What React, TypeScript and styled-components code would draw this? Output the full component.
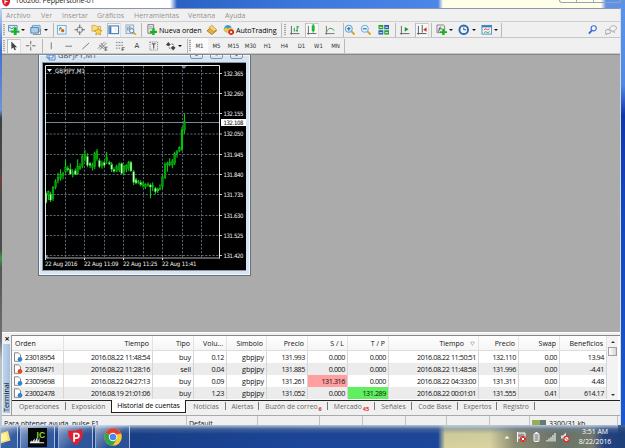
import React from "react";
import styled, { createGlobalStyle, css } from "styled-components";

type Candle = [number, number, number, number, number, number];

// x, high, low, body top, body bottom, kind (0 up, 1 down, 2 strong up)
const candles: Candle[] = [
  [46, 191.5, 203.5, 193.3, 202.7, 1], [48.4, 190.5, 200, 191.7, 195, 0], [50.6, 191.7, 202, 194.3, 200, 1],
  [53, 186, 201, 187.3, 198.7, 0], [55.6, 179.3, 189.3, 181.7, 187.3, 0], [58, 172.7, 183.3, 177.3, 180.7, 0],
  [60.6, 169.3, 180.7, 174.3, 178.3, 0], [63, 172, 179.3, 173.3, 175.3, 0], [65.6, 160, 173.3, 167.3, 171.7, 0],
  [67.8, 166, 171.7, 168, 169.7, 1], [70.3, 163.3, 175, 169.3, 174, 1], [72.7, 169.3, 177.3, 172.3, 174.7, 0],
  [75.3, 168.3, 175, 170.7, 174.3, 1], [77.7, 159.3, 174.7, 166, 174, 0], [80, 163.3, 170, 166.7, 168.7, 0],
  [82.3, 154, 168.3, 156, 166, 0], [85, 150, 161.7, 155, 158.3, 0], [87.4, 153.3, 167.3, 156.7, 165.3, 1],
  [90, 162, 168, 163.3, 165.3, 1], [92.4, 162.7, 170.7, 165, 167.3, 0], [94.7, 151.7, 169.3, 153.3, 166.7, 0],
  [97, 149, 160.7, 151.7, 158.3, 0], [99.4, 158.3, 168.3, 160.7, 166.7, 1], [102, 160.7, 168.7, 163.3, 165.3, 0],
  [104.3, 160.7, 167.3, 162.7, 165.3, 1], [106.7, 152, 164, 157.3, 160.7, 0], [109.3, 160.7, 165, 162.7, 164, 1],
  [111.7, 162, 172, 164, 169.3, 1], [114, 167.3, 172.7, 169.3, 171.3, 1], [116.7, 164.7, 172, 166.7, 171.3, 0],
  [119.3, 162.7, 172, 164, 170, 0], [121.7, 162.3, 174, 163.7, 173.3, 1], [124, 165, 175, 166, 171.7, 0],
  [126.4, 164.3, 172.3, 165.7, 169, 0], [128.7, 161, 171, 162.3, 168.3, 0], [131, 161, 171.7, 162.3, 171, 1],
  [133.7, 170, 185, 171.7, 182.3, 1], [136, 177.7, 184.3, 179.7, 183, 1], [138.4, 180, 183.7, 181.7, 183, 0],
  [140.7, 180.3, 186.3, 182.3, 185, 1], [143, 181.7, 187.7, 183, 185.7, 0], [145.4, 183.3, 189, 184.3, 187, 0],
  [148, 182.3, 186.7, 184.3, 185.7, 0], [150.4, 183.3, 198.3, 185, 187, 1], [152.7, 182.3, 191, 185, 187, 0],
  [155.3, 186.7, 194.3, 188.3, 191.7, 1], [157.7, 187.7, 193, 189, 191, 1], [160, 184.3, 190.3, 188.3, 189.3, 0],
  [162.4, 175, 189, 177, 186.3, 0], [165, 162.3, 179, 164.3, 177.7, 0], [167.4, 161.7, 171.7, 163.3, 165, 0],
  [169.7, 158.3, 166.3, 162.3, 165, 0], [172.3, 159, 168.3, 161, 165, 0], [174.7, 151.7, 165, 153.3, 163.3, 0],
  [177, 150, 157.7, 151.7, 153.7, 0], [179.4, 146.3, 152.3, 147.7, 151, 0], [182, 127, 151, 130, 149.7, 2],
  [184.4, 113.7, 133.7, 121.7, 130.3, 0],
];

const gridX = [65.5, 84.5, 104.5, 123.5, 143.5, 162.5, 182.5, 201.5];
const prices: [string, number][] = [
  ["132.365", 73.5], ["132.260", 93.5], ["132.155", 113.5], ["132.050", 134], ["131.945", 154.5],
  ["131.840", 174.5], ["131.735", 194.5], ["131.630", 215.5], ["131.525", 235.5], ["131.420", 255.5],
];
const dates: [string, number][] = [["22 Aug 2016", 45], ["22 Aug 11:09", 84], ["22 Aug 11:25", 123], ["22 Aug 11:41", 162]];

const columns = ["Orden", "Tiempo", "Tipo", "Volu...", "Símbolo", "Precio", "S / L", "T / P", "Tiempo", "Precio", "Swap", "Beneficios"];
const orders = [
  ["23018954", "2016.08.22 11:48:54", "buy", "0.12", "gbpjpy", "131.993", "0.000", "0.000", "2016.08.22 11:50:51", "132.110", "0.00", "13.94"],
  ["23018471", "2016.08.22 11:28:16", "sell", "0.04", "gbpjpy", "131.885", "0.000", "0.000", "2016.08.22 11:48:58", "131.996", "0.00", "-4.41"],
  ["23009698", "2016.08.22 04:27:13", "buy", "0.09", "gbpjpy", "131.261", "131.316", "0.000", "2016.08.22 04:33:00", "131.311", "0.00", "4.48"],
  ["23002478", "2016.08.19 21:01:06", "buy", "1.23", "gbpjpy", "131.052", "0.000", "131.289", "2016.08.22 00:01:01", "131.555", "0.41", "614.17"],
];

const tabs: { label: string; width: number; badge?: string; active?: boolean }[] = [
  { label: "Operaciones", width: 54 },
  { label: "Exposición", width: 45 },
  { label: "Historial de cuentas", width: 75, active: true },
  { label: "Noticias", width: 40 },
  { label: "Alertas", width: 33 },
  { label: "Buzón de correo", width: 69, badge: "6" },
  { label: "Mercado", width: 47, badge: "45" },
  { label: "Señales", width: 37 },
  { label: "Code Base", width: 46 },
  { label: "Expertos", width: 39 },
  { label: "Registro", width: 38 },
];

const icons: Record<string, React.ReactNode> = {
  newChart: <><path d="M.5 1.5h9v6h-9z" fill="#dcecf8" stroke="#5b93bf" /><path d="M1 3l3 2 3-2 2 2" stroke="#4c9a5a" fill="none" /><path d="M6 4h3v3h3v2H9v3H6V9H3V7h3z" fill="#18b325" /></>,
  profiles: <><path d="M2.5 1.5h8v6h-8z" fill="#cfe4f5" stroke="#6a9fc9" /><path d="M.8 3.5h8v6h-8z" fill="#a9cfec" stroke="#4d86b6" /><path d="M3 11h8V5" fill="none" stroke="#8a8f95" /></>,
  market: <><rect x="1.5" y="1.5" width="9" height="9" fill="#eef6fd" stroke="#6fb0de" /><path d="M3 5l2-2 1.5 2z" fill="#22a040" /><path d="M4 4v3" stroke="#22a040" /><circle cx="7" cy="7" r="1.7" fill="#e05a28" /></>,
  target: <><circle cx="6" cy="6" r="3" fill="none" stroke="#888" /><path d="M6 .5v4M6 7.5v4M.5 6h4M7.5 6h4" stroke="#666" /></>,
  star: <><path d="M1 1.5h4l1 1h4v5H1z" fill="#f7df84" stroke="#c9a13c" strokeWidth=".8" /><path d="M7.5 4l1.2 2.5 2.8.3-2 1.9.5 2.8-2.5-1.3L5 11.5l.5-2.8-2-1.9 2.8-.3z" fill="#ffd84a" stroke="#b98a1c" strokeWidth=".7" /></>,
  panel: <><rect x="1" y="2" width="10" height="8" fill="#fff" stroke="#4788c0" strokeWidth="1.2" /><path d="M1.5 2.5h2v7h-2z" fill="#3f7fbd" /><path d="M6 5h4M6 7h4" stroke="#dfe9f3" /></>,
  tester: <><rect x="1" y="1" width="8" height="9" fill="#dbe9f5" stroke="#8eb1cf" /><path d="M3 3v4M5 2v4M7 4v3" stroke="#777" /><circle cx="7" cy="7" r="2.2" fill="#e9f5fd" stroke="#4d86b6" /><path d="M8.5 8.500l3 3" stroke="#d7a02c" strokeWidth="1.6" /></>,
  order: <><path d="M2 .7h6v9H2z" fill="#f5f5f5" stroke="#777" /><path d="M3 3h4M3 5h4" stroke="#777" strokeWidth=".7" /><path d="M6.5 4.5h2.5v2.500h2.500v2.300H9V12H6.500V9.300H4V7h2.500z" fill="#18b325" /></>,
  book: <><path d="M1 7l5-4 5 4-5 4z" fill="#e9ad3c" stroke="#9b681a" strokeWidth=".8" /><path d="M3 4l3-3 5 5-3 2z" fill="#f6d278" stroke="#a87a25" strokeWidth=".6" /></>,
  auto: <><circle cx="5" cy="5" r="4" fill="#67b3dd" /><path d="M0 6l5-3 6 2-5 5z" fill="#f2c441" /><path d="M2 3l3-2 4 2-4 2z" fill="#4599c8" /><circle cx="8.5" cy="8.5" r="3" fill="#dd2818" /><rect x="7.5" y="7.5" width="2" height="2" fill="#fff" /></>,
  bars: <><path d="M2.5 2v9M1 10h10" stroke="#666" /><path d="M5.5 4v4M8.5 2v6M8.500 3h2M7 7h2" stroke="#169b32" /></>,
  candle: <><path d="M2.5 2v9M1 10h10" stroke="#666" /><path d="M7.5 0v9" stroke="#149a2d" /><rect x="6" y="1.5" width="3" height="6" fill="#15bb31" /></>,
  line: <><path d="M2.5 2v9M1 10h10" stroke="#777" /><path d="M3 8c2-4 4-5 8-1" fill="none" stroke="#3c9d4b" /></>,
  zoomIn: <><path d="M7.5 7.5L11 11" stroke="#d5a12d" strokeWidth="2" /><circle cx="5" cy="5" r="3.7" fill="#e2f2fb" stroke="#4d9ccf" /><path d="M3 5h4M5 3v4" stroke="#2d6fb0" strokeWidth="1.2" /></>,
  zoomOut: <><path d="M7.5 7.5L11 11" stroke="#d5a12d" strokeWidth="2" /><circle cx="5" cy="5" r="3.7" fill="#e2f2fb" stroke="#6bacd6" /><path d="M3 5h4" stroke="#2d6fb0" strokeWidth="1.2" /></>,
  tile: <><path d="M.5 1h5v4.500h-5z" fill="#2ca42f" /><path d="M6.500 1h5v4.500h-5z" fill="#2762ae" /><path d="M.5 6.500h5V11h-5z" fill="#2762ae" /><path d="M6.500 6.500h5V11h-5z" fill="#2ca42f" /><path d="M1.500 3.500h3M7.500 3.500h3M1.500 9h3M7.500 9h3" stroke="#d5f1dd" /></>,
  scroll: <><path d="M2.5 2v9M1 10h10" stroke="#666" /><path d="M6 3l4 2.5L6 8z" fill="#169b32" /></>,
  shift: <><path d="M2.5 2v9M1 10h10M6.5 1v8" stroke="#556" /><path d="M11 3.5L7.5 6 11 8z" fill="#c83324" /></>,
  indicator: <><path d="M1 1h7l1 1v7H1z" fill="#e7e7e7" stroke="#888" /><path d="M5 3c-2 0-1 5-3 5M3 5h3" stroke="#555" fill="none" /><path d="M6.5 5H9v2.500h2.500v2H9V12H6.500V9.500H4v-2h2.500z" fill="#18b325" /></>,
  clock: <><circle cx="6" cy="6" r="4.5" fill="#eaf5fd" stroke="#2d6cb3" strokeWidth="2" /><path d="M6 3.5V6h2.500" stroke="#456" fill="none" /></>,
  template: <><rect x="1" y="1.5" width="10" height="9" fill="#f2f7fb" stroke="#4f8fc6" /><path d="M1 2.5h10" stroke="#3d7fbd" strokeWidth="2" /><path d="M3 6l2-1 2 1 2-1" stroke="#d44" fill="none" /><path d="M3 9l2-1 2 1 2-1" stroke="#3a3" fill="none" /></>,
  search: <><circle cx="7" cy="4.5" r="2.7" fill="#f4f9ff" stroke="#3d6fd6" strokeWidth="1.2" /><path d="M5 6.700L2 10" stroke="#3566cc" strokeWidth="1.8" /></>,
  chat: <><path d="M5 5c0-4 7-4 7-1 0 2-2 3-3 3l1 2-3-2C5 7 5 6 5 5z" fill="#f3f3f6" stroke="#9999a3" strokeWidth=".8" /><path d="M0 8c0-3 6-3 6 0 0 2-2 2-3 2l-2 1V9.500C.3 9 0 9 0 8z" fill="#ebebf0" stroke="#85858e" strokeWidth=".8" /></>,
  cursor: <path d="M3.5 1.500v8l2-1.700 1.300 3 1.500-.7L7 7.500h2.500z" fill="#444" />,
  cross: <path d="M6 1v3.500M6 7.500V11M1 6h3.500M7.500 6H11M5.700 6h.600" stroke="#666" />,
  vline: <path d="M5.500 2.500v7" stroke="#777" />,
  hline: <path d="M2.500 6.500h7" stroke="#777" />,
  trend: <path d="M2.500 9.500l7-6.500" stroke="#777" />,
  channel: <><path d="M1 9l7-7M3 10l7-7M2 5l5 4M4 3l4 5" stroke="#666" strokeWidth=".8" /><path d="M11 7.500H8.500v4H11M8.500 9.500h2" stroke="#444" fill="none" strokeWidth=".8" /></>,
  fibo: <><path d="M2 2.500h8M2 5.500h8M2 8.500h5" stroke="#777" strokeDasharray="1 .6" /><path d="M11 8H8.500v4M8.500 10h2" stroke="#444" fill="none" strokeWidth=".8" /></>,
  label: <><rect x="2" y="2" width="8" height="8.500" fill="none" stroke="#777" strokeDasharray="1 1" /><path d="M4 4h4M6 4v5" stroke="#444" /></>,
  arrows: <><path d="M1 5l2.500-3L6 5 3.500 6.500zM6 8l2.500-2L11 8l-2.500 3z" fill="#444" /><path d="M4 8l1.500 1M7 4l2 1" stroke="#555" /></>,
};

const Icon = ({ name, gap = 5, pressed }: { name: string; gap?: number; pressed?: boolean }) => (
  <Tool $gap={gap} $pressed={pressed}>
    <svg width="11.5" height="11.5" viewBox="0 0 12 12">{icons[name]}</svg>
  </Tool>
);

const Chart = () => (
  <svg width="203" height="207" viewBox="43 63 203 207">
    <rect x="43" y="63" width="203" height="207" fill="#000" />
    <g stroke="#6f8090" strokeWidth=".8" strokeDasharray="2.2 1.5">
      {gridX.map((x) => <line key={x} x1={x} x2={x} y1="66" y2="258" />)}
      {prices.map(([p, y]) => <line key={p} x1="46" x2="220" y1={y} y2={y} />)}
    </g>
    <line x1="46" x2="220" y1="122.5" y2="122.5" stroke="#778899" />
    {candles.map(([x, high, low, top, bottom, kind]) => (
      <g key={x}>
        <line x1={x} x2={x} y1={high} y2={low} stroke="#06e00d" strokeWidth="1" />
        <rect x={x - 0.9} y={top} width="1.8" height={bottom - top} fill={["#069a0a", "#c9ffc4", "#06c90b"][kind]} stroke="#05c409" strokeWidth=".4" />
      </g>
    ))}
    <path d="M45.5 258V65.500H219.500V258.500" fill="none" stroke="#e6e6e6" />
    <path d="M45.5 258H220" fill="none" stroke="#b4b4b4" />
    <path d="M181.5 66.200h5l-2.500 2.500z" fill="#7f93aa" />
    <path d="M46 255l3 3h-3z" fill="#8d9eb2" />
    <path d="M47 69h5l-2.500 3z" fill="#fff" />
    {dates.map(([d, x]) => <path key={d} d={`M${x + 0.5} 258v2`} stroke="#ddd" />)}
    <ChartText x="55" y="72.5" textLength="30">GBPJPY,M1</ChartText>
    {prices.map(([p, y]) => (
      <g key={p}>
        <path d={`M220 ${y}h2`} stroke="#ccc" />
        <ChartText x="223.5" y={y + 2.2} textLength="20">{p}</ChartText>
      </g>
    ))}
    {dates.map(([d, x], i) => <ChartText key={d} x={x} y="266" textLength={i ? 34.5 : 32.5}>{d}</ChartText>)}
    <rect x="221" y="119" width="25" height="7" fill="#fff" />
    <ChartText x="223.5" y="124.7" textLength="20" $dark>132.108</ChartText>
  </svg>
);

const App = () => (
  <Desktop>
    <GlobalStyle />
    <TitleBar>
      <svg width="9" height="7" viewBox="0 0 9 7"><path d="M0 0h8v2Q7 6 4 6.500Q0 5 0 0z" fill="#d91f2c" /><path d="M3 0v4M3 1.500h2.500" stroke="#fff" /></svg>
      <TitleText>100266: Pepperstone-01</TitleText>
      <Caption><i /><i /><i /></Caption>
    </TitleBar>
    <AppFrame>
      <MenuBar>
        <MenuItem $width={35}>Archivo</MenuItem>
        <MenuItem $width={21}>Ver</MenuItem>
        <MenuItem $width={35}>Insertar</MenuItem>
        <MenuItem $width={37}>Gráficos</MenuItem>
        <MenuItem $width={54}>Herramientas</MenuItem>
        <MenuItem $width={37}>Ventana</MenuItem>
        <MenuItem $width={30}>Ayuda</MenuItem>
      </MenuBar>
      <Toolbar>
        <Grip $gap={1} /><Icon name="newChart" gap={3} /><Caret $gap={1} />
        <Icon name="profiles" /><Caret $gap={2} /><Separator $gap={5} />
        <Icon name="market" gap={2} /><Icon name="target" gap={6} /><Icon name="star" /><Icon name="panel" pressed /><Icon name="tester" />
        <Separator $gap={4} /><Icon name="order" gap={4} /><ToolText>Nueva orden</ToolText>
        <Icon name="book" /><Icon name="auto" /><ToolText>AutoTrading</ToolText>
        <Separator $gap={3} /><Grip $gap={2} />
        <Icon name="bars" gap={3} /><Icon name="candle" pressed /><Icon name="line" gap={6} /><Separator $gap={7} />
        <Icon name="zoomIn" gap={0} /><Icon name="zoomOut" gap={4} /><Icon name="tile" gap={6} /><Separator $gap={5} />
        <Icon name="scroll" gap={3} /><Icon name="shift" pressed /><Separator $gap={3} />
        <Icon name="indicator" gap={4} /><Caret $gap={1} /><Icon name="clock" /><Caret $gap={2} />
        <Icon name="template" /><Caret $gap={1} /><Separator $gap={3} />
        <Spacer />
        <Icon name="search" /><Icon name="chat" gap={6} />
      </Toolbar>
      <Toolbar>
        <Grip $gap={1} /><Icon name="cursor" gap={3} pressed /><Icon name="cross" /><Separator $gap={5} />
        <Icon name="vline" gap={3} /><Icon name="hline" /><Icon name="trend" /><Icon name="channel" /><Icon name="fibo" />
        <Letter>A</Letter><Icon name="label" /><Icon name="arrows" /><Caret $gap={1} /><Separator $gap={5} /><Grip $gap={1} />
        {["M1", "M5", "M15", "M30", "H1", "H4", "D1", "W1", "MN"].map((t, i) => <Period key={t} $active={i === 0}>{t}</Period>)}
        <Separator $gap={0} />
      </Toolbar>
      <Workspace>
        <ChartWindow>
          <ChartTitle>
            <svg width="10" height="9" viewBox="0 0 10 9"><path d="M1 1h6v5H1zM3 3h6v5H3z" fill="#eaf4ff" stroke="#4a86d0" /></svg>
            <span>GBPJPY,M1</span>
            <WindowButtons><b>–</b><b>▫</b><b>×</b></WindowButtons>
          </ChartTitle>
          <ChartFrame><Chart /></ChartFrame>
        </ChartWindow>
      </Workspace>
      <Terminal>
        <Side>
          <Close>×</Close>
          <SideLabel>Terminal</SideLabel>
        </Side>
        <TerminalBody>
          <TableArea>
            <div>
              <HeaderRow>
                {columns.map((c, i) => (
                  <HeadCell key={i} $left={i === 0}>
                    {c}
                    {i === 8 && <svg width="5" height="5" viewBox="0 0 5 5"><path d="M.5 1h4L2.500 4.500z" fill="#fff" stroke="#999" strokeWidth=".6" /></svg>}
                  </HeadCell>
                ))}
              </HeaderRow>
              {orders.map((o, r) => (
                <Row key={o[0]} $alt={r % 2 === 1}>
                  {o.map((v, i) => (
                    <Cell key={i} $left={i === 0} $word={i === 2 || i === 4} $mark={v === "131.316" ? "#ff9f9f" : v === "131.289" ? "#5fef5f" : undefined}>
                      {i === 0 && (
                        <svg width="10" height="10" viewBox="0 0 10 10">
                          <path d="M1.500.800h4l2 2v6.500h-6z" fill="#fff" stroke="#777" strokeWidth=".9" />
                          <circle cx="7" cy="7.300" r="2.300" fill={o[2] === "sell" ? "#dc4a22" : "#2585d6"} />
                        </svg>
                      )}
                      <span>{v}</span>
                    </Cell>
                  ))}
                </Row>
              ))}
            </div>
            <ScrollBar><Up /><Thumb /><Spacer /><Down /></ScrollBar>
          </TableArea>
          <Tabs>
            {tabs.map((t, i) => (
              <Tab key={t.label} $width={t.width} $active={t.active} $line={i !== 1 && !t.active}>
                {t.label}{t.badge && <sub>{t.badge}</sub>}
              </Tab>
            ))}
          </Tabs>
        </TerminalBody>
      </Terminal>
      <StatusBar>
        <Status $width={185}>Para obtener ayuda, pulse F1</Status>
        <Status $width={71}>Default</Status>
        <Status $width={62} /><Status $width={43} /><Status $width={43} /><Status $width={41} /><Status $width={43} /><Status $width={40} />
        <Status $width={88}>
          <svg width="15" height="8" viewBox="0 0 15 8"><path d="M1 0v8M3 0v8M5 0v8M7 0v8" stroke="#6f8f1c" strokeWidth="1.4" /><path d="M9 0v8M11 0v8M13 0v8" stroke="#254a4a" strokeWidth="1.4" /></svg>
          3300/31 kb
        </Status>
      </StatusBar>
    </AppFrame>
    <Taskbar>
      <TaskButton $width={17.5}><svg width="18" height="20" viewBox="0 0 18 20"><path d="M-2 6l10-3 3 11-13 4z" fill="#f8df66" /><path d="M-2 8l8-3 2 8-10 3z" fill="#fff3a8" /></svg></TaskButton>
      <TaskButton $width={35}>
        <svg width="19" height="19" viewBox="0 0 20 20"><rect width="20" height="20" fill="#050805" /><path d="M2 15l2-2v2l3-4v4l3-6v6l2-5v5h5v1H2z" fill="#f0f0f0" /><LogoText x="9" y="10">IC</LogoText></svg>
      </TaskButton>
      <TaskButton $width={35}>
        <svg width="17" height="18" viewBox="0 0 18 19"><path d="M1 3Q10 3 15 1Q20 9 10 18Q1 14 1 3z" fill="#e01f30" /><path d="M7.500 14.500V6h2.800a2.300 2.300 0 0 1 0 4.600H7.500" fill="none" stroke="#fff" strokeWidth="1.8" /></svg>
      </TaskButton>
      <TaskButton $width={35}>
        <svg width="18" height="18" viewBox="0 0 18 18"><circle cx="9" cy="9" r="8.800" fill="#f6cb32" /><path d="M9 9L1.400 4.600A8.800 8.800 0 0 1 16.600 4.600z" fill="#df4031" /><path d="M9 9L1.400 4.600A8.800 8.800 0 0 0 8.500 17.800L13 11z" fill="#35a452" /><path d="M9 5h7.800" stroke="#df4031" strokeWidth="1.5" /><circle cx="9" cy="9" r="4.200" fill="#fff" /><circle cx="9" cy="9" r="3.300" fill="#4a87e8" /></svg>
      </TaskButton>
      <Spacer />
      <Tray>
        <svg width="66" height="14" viewBox="502 430 66 14">
          <path d="M503.500 438.500h5l-2.500-2.500z" fill="#fff" />
          <path d="M516.500 432v10M517 433h7v5h-7" stroke="#fff" fill="#999" /><circle cx="522" cy="439" r="3" fill="#dd2c25" /><path d="M520.700 437.700l2.600 2.600M523.300 437.700l-2.600 2.600" stroke="#fff" />
          <rect x="533" y="433.500" width="5" height="8" rx="1" fill="#aaa" stroke="#f3f3f3" /><path d="M534.500 432.500h2" stroke="#fff" />
          <path d="M546 440v1.500M548 438.500v3M550 437v4.500M552 435v6.500M554 433v8.500" stroke="#eee" strokeWidth="1.2" />
          <path d="M560 435.500h2l3-3v9l-3-3h-2z" fill="#ddd" /><circle cx="565.500" cy="439" r="2.600" fill="#fff" stroke="#dd2c25" strokeWidth="1.2" /><path d="M563.700 437.200l3.600 3.600" stroke="#dd2c25" />
        </svg>
        <ClockText><span>3:51 AM</span><span>8/22/2016</span></ClockText>
      </Tray>
    </Taskbar>
  </Desktop>
);

export default App;

const GlobalStyle = createGlobalStyle`
  body {
    margin: 0;
    overflow: hidden;
  }
  * { box-sizing: border-box; }
`;

const Desktop = styled.div`
  width: 625px;
  height: 448px;
  overflow: hidden;
  display: flex;
  flex-direction: column;
  font-family: "Open Sans", "Noto Sans", sans-serif;
  font-size: 7px;
  color: #111;
  white-space: nowrap;
  background:
    linear-gradient(#dfe9f8 0, #3f6fd0 50px, #6f93d8 110px, #3c3f44 118px, #4a4a4a 172px, #7a3c3c 180px, #4c4c4c 190px, #4c4c4c 250px, #3f9a45 258px, #555 268px, #6d7076 340px, #b9c2cc 360px, #c5ccd5 100%) left / 2px 100% no-repeat,
    linear-gradient(#5c93ea 0, #5389e4 85px, #1038a8 115px, #1446ba 200px, #1d5ad2 100%);
`;

const TitleBar = styled.div`
  height: 8px;
  flex: none;
  display: flex;
  align-items: flex-start;
  padding-left: 2px;
  background: linear-gradient(90deg, #fff 0, #fff 170px, #2a62c4 177px, #3b77dd 300px, #4c86e8 438px, #fffee9 443px, #fffee9 601px, #5d92e6 606px);
`;

const TitleText = styled.span`
  margin: -5px 0 0 4px;
  font-size: 7.2px;
  line-height: 10px;
  letter-spacing: -0.1px;
  color: #222;
`;

const Caption = styled.div`
  display: flex;
  height: 3px;
  width: 62px;
  margin: 0 4px 0 auto;
  border: 1px solid #99a3ad;
  border-top: 0;
  border-radius: 0 0 3px 3px;
  i { width: 17px; border-right: 1px solid #aab; }
  i:last-child { border: 0; }
`;

const AppFrame = styled.div`
  width: 619px;
  height: 417px;
  flex: none;
  margin-left: 2px;
  background: #f0f0f0;
  border-right: 1px solid #d5dbe4;
  border-top: 1px solid #8b98aa;
  display: flex;
  flex-direction: column;
  overflow: hidden;
`;

const MenuBar = styled.div`
  height: 13px;
  flex: none;
  display: flex;
  align-items: center;
  padding-left: 4px;
  border-bottom: 1px solid #cfcfcf;
`;

const MenuItem = styled.span<{ $width: number }>`
  width: ${(p) => p.$width}px;
  font-size: 7px;
  letter-spacing: 0.02px;
  color: #929292;
`;

const Toolbar = styled.div`
  height: 16px;
  flex: none;
  display: flex;
  align-items: center;
  border-bottom: 1px solid #c6c6c6;
  padding-right: 3px;
`;

const Tool = styled.span<{ $gap: number; $pressed?: boolean }>`
  width: 12px;
  height: 14px;
  flex: none;
  margin-left: ${(p) => p.$gap}px;
  display: flex;
  align-items: center;
  justify-content: center;
  ${(p) => p.$pressed && css`
    background: #f9f9f9;
    box-shadow: -1px 0 0 #bbb, inset 0 1px 0 #c8c8c8, 1px 0 0 #ddd;
  `}
`;

const Separator = styled.i<{ $gap: number }>`
  width: 1px;
  height: 14px;
  margin-left: ${(p) => p.$gap}px;
  background: #b9b9b9;
`;

const Grip = styled.i<{ $gap: number }>`
  width: 2px;
  height: 12px;
  margin-left: ${(p) => p.$gap}px;
  background: repeating-linear-gradient(#aaa 0 1px, #e4e4e4 1px 2px);
`;

const Caret = styled.i<{ $gap: number }>`
  margin-left: ${(p) => p.$gap}px;
  border: 2px solid transparent;
  border-top-color: #111;
  border-bottom: 0;
`;

const ToolText = styled.span`
  width: 42px;
  margin-left: 1px;
  font-size: 7.2px;
  letter-spacing: -0.07px;
  color: #000;
`;

const Letter = styled.span`
  width: 12px;
  margin-left: 5px;
  text-align: center;
  font: 7px "DejaVu Sans", sans-serif;
  color: #333;
`;

const Period = styled.span<{ $active: boolean }>`
  width: 17px;
  height: 15px;
  line-height: 16px;
  text-align: center;
  font-family: "DejaVu Sans Condensed", "DejaVu Sans", sans-serif;
  font-size: 6px;
  color: #333;
  background: ${(p) => (p.$active ? "#fafafa" : "none")};
`;

const Spacer = styled.div`
  flex: 1;
`;

const Workspace = styled.div`
  height: 278px;
  flex: none;
  background: #ababab;
  border-top: 1px solid #888;
  overflow: hidden;
`;

const ChartWindow = styled.div`
  width: 213px;
  height: 222px;
  margin-left: 36px;
  margin-top: -1px;
  padding: 0 4px 4px 3px;
  background: #d7e4f3;
  border: 1px solid #66717e;
  box-shadow: inset 0 0 0 1px #f2f7fc;
`;

const ChartTitle = styled.div`
  height: 7px;
  display: flex;
  color: #40484f;
  svg { margin: -3px 2px 0 4px; }
  span { margin-top: -5px; line-height: 10px; font-size: 7.5px; }
`;

const WindowButtons = styled.div`
  display: flex;
  gap: 7px;
  margin: -3px 3px 0 auto;
  b {
    width: 13px;
    height: 7px;
    border: 1px solid #7f93ad;
    border-radius: 2px;
    font-size: 6px;
    line-height: 5px;
    text-align: center;
  }
`;

const ChartFrame = styled.div`
  height: 209px;
  padding: 1px 0 0 1px;
  background: #8d97a3;
  overflow: hidden;
  svg { display: block; }
`;

const ChartText = styled.text<{ $dark?: boolean }>`
  font-family: "DejaVu Sans Condensed", "DejaVu Sans", sans-serif;
  font-size: 6px;
  fill: ${(p) => (p.$dark ? "#000" : "#f2f2f2")};
`;

const Terminal = styled.div`
  height: 83px;
  flex: none;
  display: flex;
  background: #f0f0f0;
  border-top: 1px solid #fff;
  padding-top: 2px;
`;

const Side = styled.div`
  width: 9px;
  flex: none;
  padding-left: 1px;
`;

const Close = styled.div`
  height: 9px;
  line-height: 8px;
  font-size: 9px;
  font-weight: 700;
  text-align: center;
`;

const SideLabel = styled.div`
  height: 69px;
  width: 7px;
  writing-mode: vertical-rl;
  transform: rotate(180deg);
  line-height: 7px;
  font-size: 7.2px;
  padding-top: 1px;
  background: linear-gradient(90deg, #a3c0df, #bfd5ec);
`;

const TerminalBody = styled.div`
  flex: 1;
  border-left: 1px solid #999;
`;

const TableArea = styled.div`
  height: 65px;
  display: flex;
  background: #fff;
  border-top: 1px solid #888;
`;

const Row = styled.div<{ $alt?: boolean }>`
  display: grid;
  grid-template-columns: 52px 89px 41px 33px 40px 41px 40px 41px 90px 40px 41px 47px;
  height: 12.1px;
  background: ${(p) => (p.$alt ? "#ececec" : "#fff")};
`;

const HeaderRow = styled(Row)`
  height: 15px;
  background: linear-gradient(#fff, #f5f5f5);
  border-bottom: 1px solid #ddd;
`;

const Cell = styled.div<{ $left?: boolean; $word?: boolean; $mark?: string }>`
  display: flex;
  align-items: center;
  justify-content: ${(p) => (p.$left ? "flex-start" : "flex-end")};
  padding: 0 2px 0 ${(p) => (p.$left ? 1 : 0)}px;
  gap: 2px;
  font-size: 7.2px;
  letter-spacing: ${(p) => (p.$word ? -0.1 : -0.42)}px;
  background: ${(p) => p.$mark || "none"};
  border-right: 1px solid #d6d6d6;
`;

const HeadCell = styled.div<{ $left: boolean }>`
  display: flex;
  align-items: center;
  justify-content: ${(p) => (p.$left ? "flex-start" : "flex-end")};
  padding: 0 3px;
  gap: 6px;
  border-right: 1px solid #e4e4e4;
`;

const ScrollBar = styled.div`
  width: 11px;
  display: flex;
  flex-direction: column;
  align-items: center;
  padding: 5px 0 4px;
  background: #f3f3f3;
`;

const Up = styled.i`
  border: 2px solid transparent;
  border-bottom-color: #333;
  border-top: 0;
`;

const Down = styled.i`
  border: 2px solid transparent;
  border-top-color: #333;
  border-bottom: 0;
`;

const Thumb = styled.i`
  width: 9px;
  height: 9px;
  margin-top: 4px;
  border: 1px solid #a0a0a0;
  background: linear-gradient(90deg, #fff, #d4d4d4);
`;

const Tabs = styled.div`
  display: flex;
  height: 13px;
  border-top: 1px solid #222;
`;

const Tab = styled.div<{ $width: number; $active?: boolean; $line: boolean }>`
  width: ${(p) => p.$width}px;
  height: 12px;
  display: flex;
  align-items: center;
  justify-content: center;
  padding-bottom: 1px;
  font-size: 6.8px;
  color: #686868;
  background: ${(p) => (p.$line ? "linear-gradient(#777, #777) right 1px / 1px 8px no-repeat" : "none")};
  ${(p) => p.$active && css`
    margin-top: -1px;
    height: 13px;
    color: #000;
    font-size: 7px;
    background: #fff;
    border: 1px solid #222;
    border-top: 0;
    letter-spacing: -0.1px;
  `}
  sub {
    align-self: flex-end;
    margin-left: 1px;
    font-size: 5.5px;
    line-height: 5px;
    font-weight: 700;
    color: #e3262b;
  }
`;

const StatusBar = styled.div`
  height: 10px;
  flex: none;
  display: flex;
  border-top: 1px solid #aaa;
  overflow: hidden;
`;

const Status = styled.div<{ $width: number }>`
  width: ${(p) => p.$width}px;
  height: 12px;
  flex: none;
  display: flex;
  gap: 2px;
  padding: 3px 0 0 2px;
  line-height: 10px;
  font-size: 7px;
  box-shadow: inset -1px 0 0 #c3c3c3;
  svg { margin-top: 1px; }
`;

const Taskbar = styled.div`
  height: 23px;
  flex: none;
  display: flex;
  background:
    linear-gradient(rgba(190, 205, 220, 0.95) 0, rgba(100, 125, 160, 0.5) 4px, rgba(20, 40, 90, 0.05) 9px, transparent),
    linear-gradient(90deg, #27509a 0, #183f88 130px, #1c469a 300px, #1d479b 438px, #d7d29c 445px, #d9d4a0 490px, #8b8c72 515px, #6b7468 560px, #777d6d 592px, #254380 604px, #1c3f80 625px);
`;

const TaskButton = styled.div<{ $width: number }>`
  width: ${(p) => p.$width}px;
  height: 23px;
  margin-right: 2.5px;
  display: flex;
  align-items: center;
  justify-content: center;
  border: 1px solid rgba(205, 222, 245, 0.65);
  border-bottom: 0;
  border-radius: 2px 2px 0 0;
  background: linear-gradient(135deg, rgba(255, 255, 255, 0.5), rgba(150, 185, 230, 0.15) 60%);
`;

const LogoText = styled.text`
  font: 700 9px "Liberation Sans", sans-serif;
  fill: #8fdc32;
`;

const Tray = styled.div`
  display: flex;
  align-items: center;
  padding-right: 1px;
  border-right: 7px solid rgba(30, 65, 120, 0.7);
  svg { margin-right: 4px; }
`;

const ClockText = styled.div`
  width: 44px;
  display: flex;
  flex-direction: column;
  align-items: center;
  color: #fff;
  font-size: 6.9px;
  line-height: 10px;
  padding-top: 1px;
`;
